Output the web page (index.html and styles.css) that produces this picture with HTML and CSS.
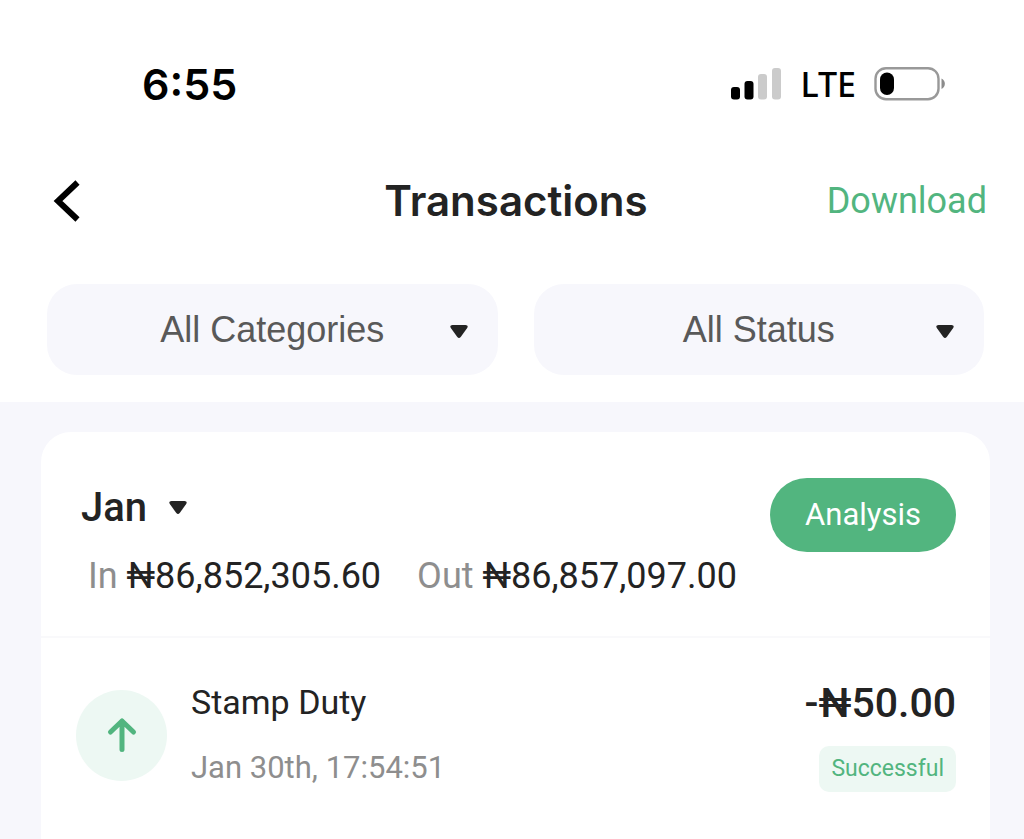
FILE: index.html
```html
<!DOCTYPE html>
<html lang="en">
<head>
<meta charset="utf-8">
<meta name="viewport" content="width=device-width, initial-scale=1">
<title>Transactions</title>
<link rel="stylesheet" href="styles.css">
</head>
<body>
<div class="top">
  <div class="status">
    <time class="clock">6:55</time>
    <div class="indicators">
      <svg class="signal" width="52" height="34" viewBox="0 0 52 34" aria-hidden="true">
        <rect x="1" y="20" width="9" height="12.500" rx="3" fill="#000"/>
        <rect x="14.500" y="14" width="9" height="18.500" rx="3" fill="#000"/>
        <rect x="28" y="7" width="9" height="25.500" rx="3" fill="#cbcbcb"/>
        <rect x="42" y="1" width="9" height="31.500" rx="3" fill="#cbcbcb"/>
      </svg>
      <span class="network">LTE</span>
      <svg class="battery" width="72" height="34" viewBox="0 0 72 34" aria-hidden="true">
        <rect x="1.500" y="1.200" width="63" height="31" rx="10.500" fill="none" stroke="#999" stroke-width="2.400"/>
        <rect x="6" y="5.500" width="14" height="22.500" rx="7" fill="#000"/>
        <path d="M67.500 11.500C72 14 72 19.500 67.500 22Z" fill="#8c8c8c"/>
      </svg>
    </div>
  </div>
  <header class="header">
    <button class="back" type="button" aria-label="Back">
      <svg width="28" height="42" viewBox="0 0 28 42" aria-hidden="true"><path d="M24.500 2.500 L5 21 L24.500 39.500" fill="none" stroke="#000" stroke-width="6"/></svg>
    </button>
    <h1 class="title">Transactions</h1>
    <a class="download" href="#">Download</a>
  </header>
  <div class="filters">
    <div class="filter">
      <select class="filter-select" aria-label="Category"><option>All Categories</option></select>
      <svg class="caret" width="18" height="14" viewBox="0 0 18 14" aria-hidden="true"><path d="M2.500 0H15.500Q19 .3 17 3.300L10.700 12Q9 14 7.300 12L1 3.300Q-1 .3 2.500 0Z" fill="#232323"/></svg>
    </div>
    <div class="filter">
      <select class="filter-select" aria-label="Status"><option>All Status</option></select>
      <svg class="caret" width="18" height="14" viewBox="0 0 18 14" aria-hidden="true"><path d="M2.500 0H15.500Q19 .3 17 3.300L10.700 12Q9 14 7.300 12L1 3.300Q-1 .3 2.500 0Z" fill="#232323"/></svg>
    </div>
  </div>
</div>
<main class="content">
  <section class="card">
    <div class="summary">
      <div class="summary-info">
        <div class="month">
          <select class="month-select" aria-label="Month"><option>Jan</option></select>
          <svg width="18" height="14" viewBox="0 0 18 14" aria-hidden="true"><path d="M2.500 0H15.500Q19 .3 17 3.300L10.700 12Q9 14 7.300 12L1 3.300Q-1 .3 2.500 0Z" fill="#232323"/></svg>
        </div>
        <div class="totals">
          <span><span class="label">In</span> ₦86,852,305.60</span>
          <span><span class="label">Out</span> ₦86,857,097.00</span>
        </div>
      </div>
      <button class="analysis" type="button">Analysis</button>
    </div>
    <article class="row">
      <div class="row-icon">
        <svg width="32" height="36" viewBox="0 0 32 36" aria-hidden="true"><path d="M16 32.500V4M4.500 15L16 4L27.500 15" fill="none" stroke="#52b57f" stroke-width="5" stroke-linecap="round" stroke-linejoin="round"/></svg>
      </div>
      <div class="row-text">
        <h2 class="row-title">Stamp Duty</h2>
        <time class="row-date">Jan 30th, 17:54:51</time>
      </div>
      <div class="row-side">
        <span class="amount">-₦50.00</span>
        <span class="badge">Successful</span>
      </div>
    </article>
  </section>
</main>
</body>
</html>
```
FILE: styles.css
```css
* {
  box-sizing: border-box;
}

body {
  margin: 0;
  min-height: 100vh;
  display: flex;
  flex-direction: column;
  background: #f7f7fc;
  color: #232323;
  font-family: Roboto, "Liberation Sans", sans-serif;
}

button,
select {
  border: 0;
  padding: 0;
  background: none;
  color: inherit;
  font: inherit;
  appearance: none;
  cursor: pointer;
}

svg {
  display: block;
  flex: none;
}

.top {
  background: #fff;
  padding-bottom: 27px;
}

.status {
  display: flex;
  align-items: center;
  justify-content: space-between;
  padding: 60px 78px 0 142px;
}

.clock {
  font: 600 43px/48px Inter, sans-serif;
  color: #000;
}

.indicators {
  display: flex;
  align-items: center;
  gap: 18px;
}

.network {
  font: 500 34px/48px "Noto Sans", sans-serif;
  color: #000;
}

.header {
  display: grid;
  grid-template-columns: 1fr auto 1fr;
  align-items: center;
  padding: 69px 37px 0 45px;
}

.back {
  justify-self: start;
  padding-left: 8px;
}

.title {
  margin: 0;
  font: 600 42px/48px Inter, sans-serif;
}

.download {
  justify-self: end;
  color: #52b57f;
  font-size: 36px;
  line-height: 48px;
  text-decoration: none;
}

.filters {
  display: grid;
  grid-template-columns: 1fr 1fr;
  gap: 36px;
  padding: 59px 40px 0 47px;
}

.filter {
  position: relative;
}

.filter-select {
  width: 100%;
  height: 91px;
  border-radius: 30px;
  background: #f7f7fc;
  color: #595959;
  font: 36px/48px "Liberation Sans", sans-serif;
  text-align: center;
  text-align-last: center;
}

.caret {
  position: absolute;
  right: 30px;
  top: 41px;
  pointer-events: none;
}

.content {
  flex: 1;
  display: flex;
  flex-direction: column;
  padding: 30px 34px 0 41px;
}

.card {
  flex: 1;
  border-radius: 30px 30px 0 0;
  background: #fff;
}

.summary {
  display: flex;
  align-items: flex-start;
  justify-content: space-between;
  padding: 46px 34px 35px 40px;
  border-bottom: 2px solid #f9f9fb;
}

.month {
  display: flex;
  align-items: center;
  gap: 21px;
}

.month-select {
  font-size: 40px;
  font-weight: 500;
  line-height: 60px;
}

.totals {
  display: flex;
  gap: 36px;
  padding: 13px 0 0 7px;
  font-size: 36px;
  line-height: 50px;
  white-space: nowrap;
}

.label {
  color: #8e8e8e;
}

.analysis {
  flex: none;
  margin-left: -40px;
  padding: 12px 35px;
  border-radius: 37px;
  background: #52b57f;
  color: #fff;
  font-size: 31px;
  line-height: 50px;
}

.row {
  display: flex;
  align-items: center;
  gap: 24px;
  padding: 40px 34px 38px 35px;
}

.row-icon {
  display: grid;
  place-items: center;
  width: 91px;
  height: 91px;
  border-radius: 50%;
  background: #edf8f3;
}

.row-text {
  flex: 1;
  display: flex;
  flex-direction: column;
  gap: 18px;
}

.row-title {
  margin: 0;
  font-size: 34px;
  font-weight: 400;
  line-height: 48px;
}

.row-date {
  color: #8e8e8e;
  font-size: 31px;
  line-height: 48px;
}

.row-side {
  display: flex;
  flex-direction: column;
  align-items: flex-end;
  gap: 18px;
}

.amount {
  font-size: 41px;
  font-weight: 500;
  line-height: 50px;
}

.badge {
  padding: 0 12px;
  border-radius: 10px;
  background: #edf8f3;
  color: #52b57f;
  font-size: 23px;
  line-height: 46px;
}
```
